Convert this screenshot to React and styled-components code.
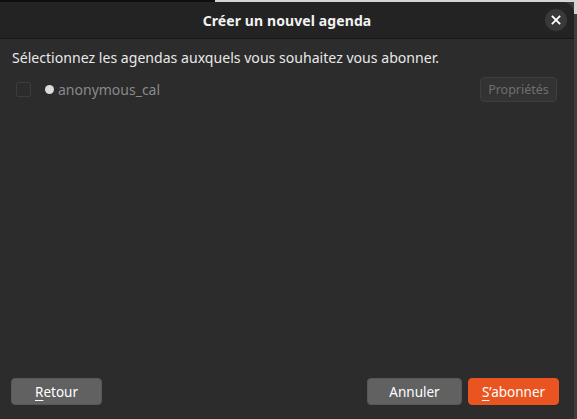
import React from "react";
import styled, { createGlobalStyle } from "styled-components";

const GlobalStyle = createGlobalStyle`
  html, body {
    margin: 0;
    padding: 0;
    background: #3b3b3b;
    font-family: "Noto Sans", "Open Sans", sans-serif;
  }
`;

const Screen = styled.div`
  width: 577px;
  height: 419px;
  display: flex;
  flex-direction: column;
  overflow: hidden;
`;

const TopEdge = styled.div`
  height: 2px;
  flex: none;
  background: linear-gradient(to right, #0e0e0e 215px, #d4d4d4 215px);
`;

const Frame = styled.div`
  flex: 1;
  display: flex;
  min-height: 0;
`;

const RightEdge = styled.div`
  width: 3px;
  flex: none;
  background: linear-gradient(to bottom, #d4d4d4 12px, #3d3d3d 12px);
`;

const Dialog = styled.div`
  flex: 1;
  display: flex;
  flex-direction: column;
  background: #2c2c2c;
  border-top-right-radius: 12px;
  overflow: hidden;
`;

const Header = styled.header`
  height: 36px;
  flex: none;
  display: grid;
  grid-template-columns: 1fr auto 1fr;
  align-items: center;
  background: #232323;
  border-bottom: 1px solid #161616;
  padding: 0 10px;
`;

const Title = styled.h1`
  grid-column: 2;
  margin: 0;
  font-size: 14px;
  font-weight: 700;
  color: #f2f2f2;
  letter-spacing: 0.1px;
`;

const CloseButton = styled.button`
  grid-column: 3;
  justify-self: end;
  width: 22px;
  height: 22px;
  border-radius: 50%;
  border: none;
  padding: 0;
  background: #393939;
  display: flex;
  align-items: center;
  justify-content: center;
  margin-right: -3px;
`;

const Body = styled.main`
  flex: 1;
  display: flex;
  flex-direction: column;
  padding: 9px 16px 0 12px;
`;

const Intro = styled.p`
  margin: 0;
  font-size: 14.1px;
  color: #e8e8e8;
`;

const CalendarRow = styled.div`
  display: flex;
  align-items: center;
  margin-top: 10px;
  height: 24px;
`;

const Check = styled.span`
  width: 13px;
  height: 13px;
  border: 1px solid #3c3c3c;
  border-radius: 2px;
  margin-left: 4px;
  margin-right: 14px;
  flex: none;
`;

const Dot = styled.span`
  width: 9px;
  height: 9px;
  border-radius: 50%;
  background: ${(p) => p.$color};
  margin-right: 4px;
  flex: none;
`;

const CalName = styled.span`
  flex: 1;
  font-size: 14px;
  color: #8a8a8a;
`;

const SmallButton = styled.button`
  height: 25px;
  width: 77px;
  padding: 0;
  border-radius: 4px;
  border: 1px solid #3e3e3e;
  background: #333333;
  color: #6f6f6f;
  font-family: inherit;
  font-size: 12.5px;
  margin-right: 1px;
`;

const Footer = styled.footer`
  display: flex;
  align-items: center;
  gap: 6px;
  padding: 0 15px 14px 11px;
`;

const Spacer = styled.div`
  flex: 1;
`;

const Button = styled.button`
  height: 27px;
  width: ${(p) => p.$width}px;
  border-radius: 4px;
  border: 1px solid ${(p) => (p.$primary ? "#e95420" : "#585858")};
  background: ${(p) => (p.$primary ? "#e95420" : "#616161")};
  color: #ffffff;
  font-family: inherit;
  font-size: 13.5px;
  padding: 0;

  u {
    text-decoration-thickness: 1px;
    text-underline-offset: 3px;
  }
`;

export default function App() {
  return (
    <>
      <GlobalStyle />
      <Screen>
        <TopEdge />
        <Frame>
          <Dialog>
            <Header>
              <Title>Créer un nouvel agenda</Title>
              <CloseButton aria-label="Fermer">
                <svg width="10" height="10" viewBox="0 0 10 10">
                  <path
                    d="M1.5 1.5 L8.5 8.5 M8.5 1.5 L1.5 8.5"
                    stroke="#ffffff"
                    strokeWidth="1.8"
                    strokeLinecap="square"
                  />
                </svg>
              </CloseButton>
            </Header>
            <Body>
              <Intro>Sélectionnez les agendas auxquels vous souhaitez vous abonner.</Intro>
              <CalendarRow>
                <Check />
                <Dot $color="#dcdcdc" />
                <CalName>anonymous_cal</CalName>
                <SmallButton>Propriétés</SmallButton>
              </CalendarRow>
            </Body>
            <Footer>
              <Button $width={91}>
                <u>R</u>etour
              </Button>
              <Spacer />
              <Button $width={95}>Annuler</Button>
              <Button $width={91} $primary>
                <u>S</u>’abonner
              </Button>
            </Footer>
          </Dialog>
          <RightEdge />
        </Frame>
      </Screen>
    </>
  );
}
